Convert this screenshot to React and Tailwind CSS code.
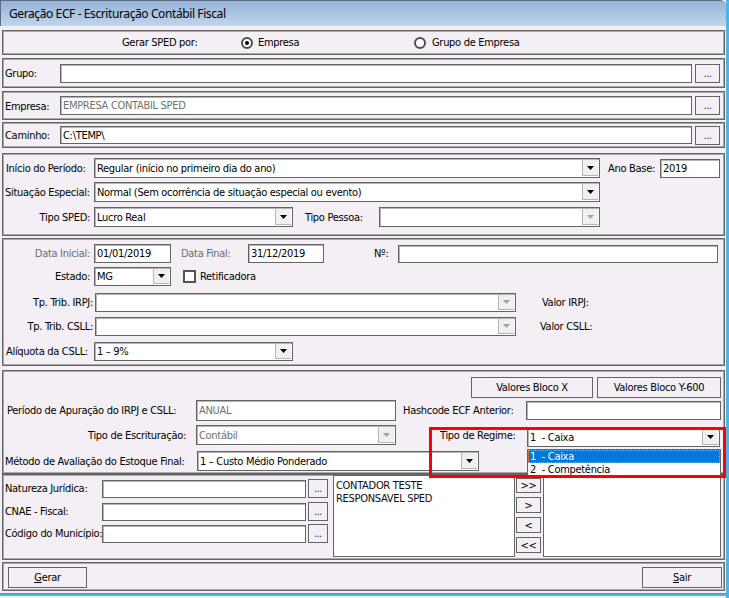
import React from "react";

const ui = "[font-family:'DejaVu_Sans_Condensed','Liberation_Sans',sans-serif] text-[11px] leading-[13px] tracking-[-0.3px]";
const edge = "shadow-[inset_1px_1px_0_#a9a9a9,inset_-1px_-1px_0_#a9a9a9]";

function Arrow({ disabled }) {
  return (
    <svg width="7" height="4" viewBox="0 0 7 4">
      <path d="M0 0h7L3.5 4z" fill={disabled ? "#a3a3a3" : "#000"} />
    </svg>
  );
}

function Field({ className = "", muted, children }) {
  return (
    <div
      className={`shrink-0 bg-white border border-[#646464] shadow-[inset_1px_1px_0_#b5b5b5] flex items-center pl-[2px] whitespace-nowrap overflow-hidden ${
        muted ? "text-[#707070]" : "text-black"
      } ${className}`}
    >
      {children}
    </div>
  );
}

function Combo({ className = "", muted, disabled, children }) {
  return (
    <div className={`shrink-0 bg-white border border-[#646464] shadow-[inset_1px_1px_0_#b5b5b5] flex ${className}`}>
      <div
        className={`flex-1 flex items-center pl-[2px] whitespace-nowrap overflow-hidden ${
          muted ? "text-[#707070]" : "text-black"
        }`}
      >
        {children}
      </div>
      <div className="w-[16px] my-[1px] mr-[1px] bg-[#f0f0f0] border-l border-b border-[#b4b4b4] flex items-center justify-center">
        <Arrow disabled={disabled} />
      </div>
    </div>
  );
}

function Dots({ className = "" }) {
  return (
    <div
      className={`shrink-0 bg-[#f4eff4] border border-[#646464] flex items-end justify-center pb-[3px] text-[#101060] text-[10px] leading-none ${className}`}
    >
      ...
    </div>
  );
}

function Btn({ className = "", children }) {
  return (
    <div
      className={`shrink-0 bg-[#f4eff4] border border-[#646464] flex items-center justify-center text-black whitespace-nowrap ${className}`}
    >
      {children}
    </div>
  );
}

function Radio({ checked }) {
  return (
    <span className="shrink-0 w-[12px] h-[12px] rounded-full border-2 border-[#4e4e4e] bg-white flex items-center justify-center">
      {checked && <span className="w-[4px] h-[4px] rounded-full bg-black" />}
    </span>
  );
}

const panel = `shrink-0 w-[723px] border border-[#646464] ${edge}`;
const lbl = "shrink-0 whitespace-nowrap";

export default function App() {
  return (
    <div className={`relative w-[729px] h-[598px] overflow-hidden bg-[#f4eff4] border-r-[3px] border-[#48b6e6] flex flex-col ${ui}`}>
      {/* Title bar */}
      <div className="shrink-0 h-[26px] rounded-tr-[6px] border-t border-l border-[#5a6d86] bg-linear-to-b from-[#97b3d6] to-[#bed5ed] flex items-center pl-[8px] text-black text-[12px] tracking-[-0.4px] [font-family:'Noto_Sans','Open_Sans',sans-serif]">
        Geração ECF - Escrituração Contábil Fiscal
      </div>

      <div className="flex flex-col pl-[2px]">
        {/* Gerar SPED por */}
        <div className={`${panel} mt-[4px] h-[25px] flex items-center`}>
          <span className="w-[119px] shrink-0" />
          <span className={`w-[119px] ${lbl}`}>Gerar SPED por:</span>
          <Radio checked />
          <span className={`ml-[5px] w-[156px] ${lbl}`}>Empresa</span>
          <Radio />
          <span className={`ml-[6px] ${lbl}`}>Grupo de Empresa</span>
        </div>

        {/* Grupo */}
        <div className={`${panel} mt-[3px] h-[30px] flex items-start pt-[5px]`}>
          <span className={`w-[57px] pl-[2px] mt-[3px] ${lbl}`}>Grupo:</span>
          <Field className="w-[632px] h-[19px]" />
          <Dots className="ml-[3px] w-[25px] h-[19px]" />
        </div>

        {/* Empresa */}
        <div className={`${panel} mt-[3px] h-[29px] flex items-start pt-[4px]`}>
          <span className={`w-[57px] pl-[2px] mt-[4px] ${lbl}`}>Empresa:</span>
          <Field className="w-[632px] h-[19px]" muted>
            EMPRESA CONTABIL SPED
          </Field>
          <Dots className="ml-[3px] w-[25px] h-[19px]" />
        </div>

        {/* Caminho */}
        <div className={`${panel} mt-[2px] h-[26px] flex items-start pt-[3px]`}>
          <span className={`w-[57px] pl-[2px] mt-[3px] ${lbl}`}>Caminho:</span>
          <Field className="w-[632px] h-[18px]">C:\TEMP\</Field>
          <Dots className="ml-[3px] w-[25px] h-[19px]" />
        </div>

        {/* Periodo */}
        <div className={`${panel} mt-[5px] h-[83px] flex flex-col pt-[4px]`}>
          <div className="flex items-center">
            <span className={`w-[91px] pl-[3px] ${lbl}`}>Início do Período:</span>
            <Combo className="w-[506px] h-[20px]">Regular (início no primeiro dia do ano)</Combo>
            <span className={`ml-[8px] w-[52px] ${lbl}`}>Ano Base:</span>
            <Field className="w-[60px] h-[19px]">2019</Field>
          </div>
          <div className="flex items-center mt-[4px]">
            <span className={`w-[91px] pl-[2px] ${lbl}`}>Situação Especial:</span>
            <Combo className="w-[506px] h-[20px]">Normal (Sem ocorrência de situação especial ou evento)</Combo>
          </div>
          <div className="flex items-center mt-[5px]">
            <span className={`w-[91px] text-right pr-[4px] ${lbl}`}>Tipo SPED:</span>
            <Combo className="w-[199px] h-[20px]">Lucro Real</Combo>
            <span className={`ml-[12px] w-[74px] ${lbl}`}>Tipo Pessoa:</span>
            <Combo className="w-[221px] h-[20px]" disabled />
          </div>
        </div>

        {/* Datas */}
        <div className={`${panel} mt-[2px] h-[128px] flex flex-col pt-[5px]`}>
          <div className="flex items-center">
            <span className={`w-[91px] text-right pr-[4px] text-[#6d6d6d] ${lbl}`}>Data Inicial:</span>
            <Field className="w-[77px] h-[19px]">01/01/2019</Field>
            <span className={`ml-[10px] w-[67px] text-[#6d6d6d] ${lbl}`}>Data Final:</span>
            <Field className="w-[76px] h-[19px]">31/12/2019</Field>
            <span className={`ml-[50px] w-[24px] ${lbl}`}>Nº:</span>
            <Field className="w-[320px] h-[18px]" />
          </div>
          <div className="flex items-center mt-[4px]">
            <span className={`w-[91px] text-right pr-[4px] ${lbl}`}>Estado:</span>
            <Combo className="w-[77px] h-[19px]">MG</Combo>
            <span className="ml-[12px] w-[13px] h-[13px] shrink-0 border-2 border-[#555] bg-white" />
            <span className={`ml-[4px] ${lbl}`}>Retificadora</span>
          </div>
          <div className="flex items-center mt-[7px]">
            <span className={`w-[92px] text-right pr-[2px] ${lbl}`}>Tp. Trib. IRPJ:</span>
            <Combo className="w-[421px] h-[19px]" disabled />
            <span className={`ml-[26px] ${lbl}`}>Valor IRPJ:</span>
          </div>
          <div className="flex items-center mt-[5px]">
            <span className={`w-[92px] text-right pr-[2px] ${lbl}`}>Tp. Trib. CSLL:</span>
            <Combo className="w-[421px] h-[19px]" disabled />
            <span className={`ml-[24px] ${lbl}`}>Valor CSLL:</span>
          </div>
          <div className="flex items-center mt-[6px]">
            <span className={`w-[91px] pl-[3px] ${lbl}`}>Alíquota da CSLL:</span>
            <Combo className="w-[199px] h-[19px]">1 – 9%</Combo>
          </div>
        </div>

        {/* Apuracao */}
        <div className={`${panel} mt-[4px] h-[104px] flex flex-col pt-[6px]`}>
          <div className="flex items-center">
            <Btn className="ml-[468px] w-[122px] h-[21px]">Valores Bloco X</Btn>
            <Btn className="ml-[4px] w-[124px] h-[21px]">Valores Bloco Y-600</Btn>
          </div>
          <div className="flex items-center mt-[2px]">
            <span className={`w-[193px] pl-[4px] ${lbl}`}>Período de Apuração do IRPJ e CSLL:</span>
            <Field className="w-[200px] h-[21px]" muted>ANUAL</Field>
            <span className={`ml-[7px] w-[123px] ${lbl}`}>Hashcode ECF Anterior:</span>
            <Field className="w-[195px] h-[19px]" />
          </div>
          <div className="flex items-start mt-[4px]">
            <span className={`w-[193px] text-right pr-[10px] mt-[4px] ${lbl}`}>Tipo de Escrituração:</span>
            <Combo className="w-[200px] h-[20px]" muted disabled>Contábil</Combo>
            <span className={`ml-[44px] w-[87px] mt-[4px] ${lbl}`}>Tipo de Regime:</span>
            <Combo className="w-[193px] h-[19px] mt-[3px]">1&nbsp; - Caixa</Combo>
          </div>
          <div className="flex items-center mt-[4px]">
            <span className={`w-[194px] pl-[2px] ${lbl}`}>Método de Avaliação do Estoque Final:</span>
            <Combo className="w-[282px] h-[20px]">1 – Custo Médio Ponderado</Combo>
          </div>
        </div>

        {/* Natureza / responsaveis */}
        <div className={`${panel} h-[86px] flex`}>
          <div className="w-[330px] shrink-0 flex flex-col pt-[4px]">
            <div className="flex items-center">
              <span className={`w-[99px] pl-[2px] ${lbl}`}>Natureza Jurídica:</span>
              <Field className="w-[204px] h-[18px]" />
              <Dots className="ml-[2px] w-[20px] h-[19px]" />
            </div>
            <div className="flex items-center mt-[4px]">
              <span className={`w-[99px] pl-[2px] ${lbl}`}>CNAE - Fiscal:</span>
              <Field className="w-[204px] h-[18px]" />
              <Dots className="ml-[2px] w-[20px] h-[19px]" />
            </div>
            <div className="flex items-center mt-[3px]">
              <span className={`w-[99px] pl-[2px] ${lbl}`}>Código do Município:</span>
              <Field className="w-[204px] h-[18px]" />
              <Dots className="ml-[2px] w-[20px] h-[19px]" />
            </div>
          </div>
          <div className="w-[182px] h-[82px] shrink-0 bg-white border border-[#646464] pl-[2px] pt-[3px] text-[#0b0b20] whitespace-nowrap">
            <div>CONTADOR TESTE</div>
            <div>RESPONSAVEL SPED</div>
          </div>
          <div className="w-[25px] shrink-0 ml-[1px] flex flex-col pt-[3px] gap-[4px]">
            <Btn className="w-[25px] h-[15px]">&gt;&gt;</Btn>
            <Btn className="w-[25px] h-[16px]">&gt;</Btn>
            <Btn className="w-[25px] h-[16px]">&lt;</Btn>
            <Btn className="w-[25px] h-[16px]">&lt;&lt;</Btn>
          </div>
          <div className="ml-[2px] w-[178px] h-[82px] shrink-0 bg-white border border-[#646464]" />
        </div>

        {/* Botoes */}
        <div className={`${panel} mt-[2px] h-[29px] flex items-start pt-[4px]`}>
          <Btn className="ml-[5px] w-[79px] h-[21px]">
            <span className="underline">G</span>erar
          </Btn>
          <Btn className="ml-auto mr-[2px] w-[80px] h-[21px]">
            <span className="underline">S</span>air
          </Btn>
        </div>
      </div>

      <div className="mt-auto mb-[2px] h-[3px] bg-[#48b6e6] border-t border-[#6c8aa8]" />

      {/* Dropdown list of Tipo de Regime */}
      <div className="absolute left-[527px] top-[449px] w-[194px] h-[28px] bg-white border border-[#646464] flex flex-col">
        <div className="h-[13px] bg-[#0078d7] text-white border border-dotted border-[#f0a040] flex items-center pl-[1px] whitespace-nowrap">
          1&nbsp; - Caixa
        </div>
        <div className="h-[13px] flex items-center pl-[2px] text-black whitespace-nowrap">2&nbsp; - Competência</div>
      </div>

      {/* Red highlight */}
      <div className="absolute left-[429px] top-[427px] w-[297px] h-[51px] border-[3px] border-[#ff0000]" />
    </div>
  );
}
